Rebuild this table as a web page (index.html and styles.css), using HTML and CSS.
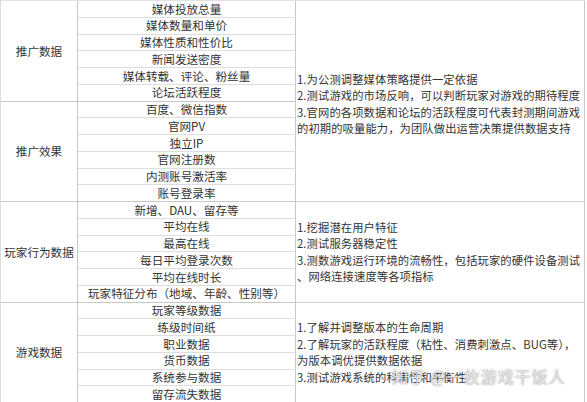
FILE: index.html
```html
<!DOCTYPE html>
<html lang="zh">
<head>
<meta charset="utf-8">
<link rel="stylesheet" href="styles.css">
</head>
<body>
<div class="sheet">
  <div class="grp g1">推广数据</div>
  <div class="item r1">媒体投放总量</div>
  <div class="item r2">媒体数量和单价</div>
  <div class="item r3">媒体性质和性价比</div>
  <div class="item r4">新闻发送密度</div>
  <div class="item r5">媒体转载、评论、粉丝量</div>
  <div class="item r6 last">论坛活跃程度</div>

  <div class="grp g2">推广效果</div>
  <div class="item r7">百度、微信指数</div>
  <div class="item r8">官网PV</div>
  <div class="item r9">独立IP</div>
  <div class="item r10">官网注册数</div>
  <div class="item r11">内测账号激活率</div>
  <div class="item r12 last">账号登录率</div>

  <div class="grp g3">玩家行为数据</div>
  <div class="item r13">新增、DAU、留存等</div>
  <div class="item r14">平均在线</div>
  <div class="item r15">最高在线</div>
  <div class="item r16">每日平均登录次数</div>
  <div class="item r17">平均在线时长</div>
  <div class="item r18 last">玩家特征分布（地域、年龄、性别等）</div>

  <div class="grp g4">游戏数据</div>
  <div class="item r19">玩家等级数据</div>
  <div class="item r20">练级时间纸</div>
  <div class="item r21">职业数据</div>
  <div class="item r22">货币数据</div>
  <div class="item r23">系统参与数据</div>
  <div class="item r24 last">留存流失数据</div>

  <div class="note n1"><p>1.为公测调整媒体策略提供一定依据<br>2.测试游戏的市场反响，可以判断玩家对游戏的期待程度<br>3.官网的各项数据和论坛的活跃程度可代表封测期间游戏<br>的初期的吸量能力，为团队做出运营决策提供数据支持</p></div>
  <div class="note n2"><p>1.挖掘潜在用户特征<br>2.测试服务器稳定性<br>3.测数游戏运行环境的流畅性，包括玩家的硬件设备测试<br>、网络连接速度等各项指标</p></div>
  <div class="note n3"><p>1.了解并调整版本的生命周期<br>2.了解玩家的活跃程度（粘性、消费刺激点、BUG等），<br>为版本调优提供数据依据<br>3.测试游戏系统的科满性和平衡性</p></div>
</div>
<div class="watermark">知乎 @一枚游戏干饭人</div>
</body>
</html>
```
FILE: styles.css
```css
html, body {
  margin: 0;
  padding: 0;
  background: #ffffff;
}
body {
  width: 587px;
  height: 402px;
  overflow: hidden;
  position: relative;
  font-family: "Noto Sans CJK SC", "Microsoft YaHei", sans-serif;
  font-size: 11.6px;
  color: #333333;
}
.sheet {
  box-sizing: border-box;
  width: 585px;
  height: 403px;
  display: grid;
  grid-template-columns: 77px 218px 1fr;
  grid-template-rows: repeat(24, 1fr);
  border-left: 1px solid #dcdcdc;
  border-top: 1px solid #e2e2e2;
}
.grp, .item, .note {
  box-sizing: border-box;
  border-right: 1px solid #c6c6c6;
  border-bottom: 1px solid #d6d6d6;
  white-space: nowrap;
}
.grp {
  grid-column: 1;
  display: flex;
  align-items: center;
  justify-content: center;
  border-bottom-color: #c8c8c8;
}
.g1 { grid-row: 1 / span 6; }
.g2 { grid-row: 7 / span 6; }
.g3 { grid-row: 13 / span 6; }
.g4 { grid-row: 19 / span 6; }
.item {
  grid-column: 2;
  display: flex;
  align-items: center;
  justify-content: center;
  line-height: 1;
  padding-top: 1px;
  border-bottom-color: #dedede;
}
.item.last {
  border-bottom-color: #c8c8c8;
}
.note {
  grid-column: 3;
  display: flex;
  align-items: center;
  padding-left: 1px;
  border-bottom-color: #d0d0d0;
}
.note p {
  margin: 0;
  font-size: 11.3px;
  line-height: 16.4px;
  letter-spacing: 0.1px;
}
.n1 { grid-row: 1 / span 12; padding-top: 5px; }
.n2 { grid-row: 13 / span 6; }
.n3 { grid-row: 19 / span 6; }
.watermark {
  position: absolute;
  left: 392px;
  top: 364px;
  font-size: 16px;
  letter-spacing: 1px;
  color: rgba(255, 255, 255, 0.8);
  text-shadow: 0 0 1px rgba(120, 120, 120, 0.9), 0 0 2px rgba(150, 150, 150, 0.5);
  white-space: nowrap;
}
```
